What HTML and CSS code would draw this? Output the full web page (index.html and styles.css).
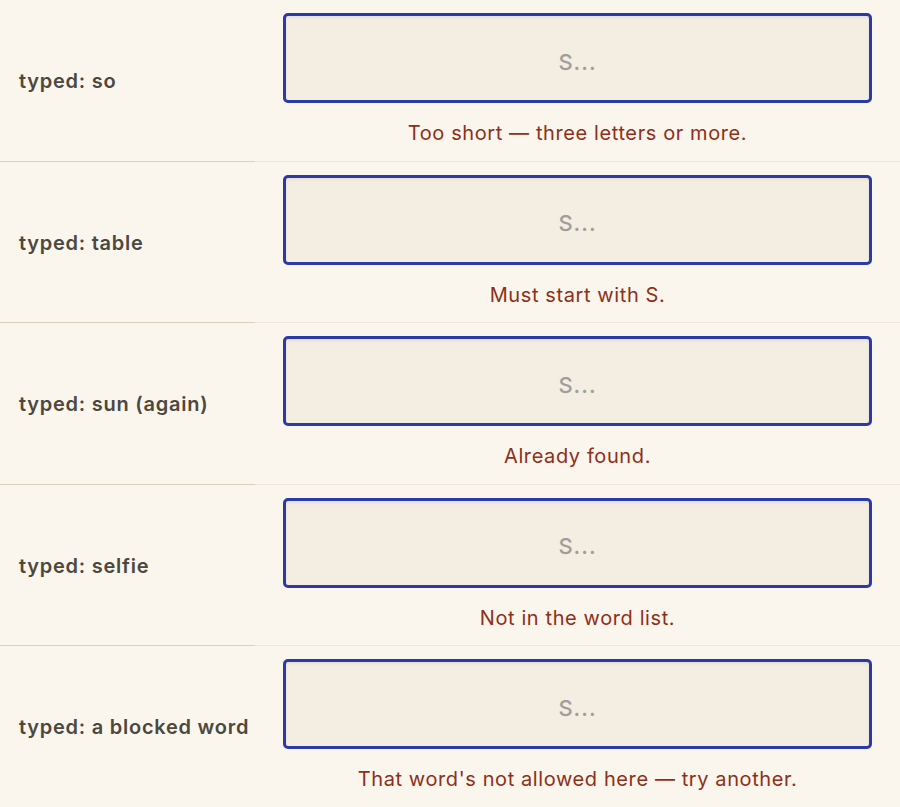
FILE: index.html
```html
<!DOCTYPE html>
<html>
  <head>
    <meta charset="utf-8">
    <title>Word entry states</title>
    <link rel="stylesheet" href="styles.css">
  </head>
  <body>
    <table class="states">
      <tr>
        <th>typed: so</th>
        <td>
          <input type="text" class="guess" placeholder="S...">
          <p class="msg">Too short — three letters or more.</p>
        </td>
      </tr>
      <tr>
        <th>typed: table</th>
        <td>
          <input type="text" class="guess" placeholder="S...">
          <p class="msg">Must start with S.</p>
        </td>
      </tr>
      <tr>
        <th>typed: sun (again)</th>
        <td>
          <input type="text" class="guess" placeholder="S...">
          <p class="msg">Already found.</p>
        </td>
      </tr>
      <tr>
        <th>typed: selfie</th>
        <td>
          <input type="text" class="guess" placeholder="S...">
          <p class="msg">Not in the word list.</p>
        </td>
      </tr>
      <tr>
        <th>typed: a blocked word</th>
        <td>
          <input type="text" class="guess" placeholder="S...">
          <p class="msg">That word's not allowed here — try another.</p>
        </td>
      </tr>
    </table>
  </body>
</html>
```

FILE: styles.css
```css
html, body {
    margin: 0;
    padding: 0;
    background: #faf6ee;
}

body {
    font-family: "Inter", "Liberation Sans", sans-serif;
}

.states {
    width: 900px;
    border-collapse: collapse;
}

.states th {
    width: 236px;
    padding: 2px 0 0 19px;
    text-align: left;
    vertical-align: middle;
    font-size: 20px;
    font-weight: 600;
    letter-spacing: 0.75px;
    color: #4c483d;
    border-bottom: 1px solid #dccfbb;
}

.states td {
    padding: 13px 28px 13px;
    text-align: center;
    border-bottom: 1px solid #ece6db;
}

.guess {
    display: block;
    box-sizing: border-box;
    width: 100%;
    height: 90px;
    margin: 0;
    padding: 7px 0 0;
    border: 3px solid #2c3aa8;
    border-radius: 5px;
    background: #f3ede2;
    box-shadow: inset 0 2px 3px rgba(0, 0, 0, 0.06);
    font-family: inherit;
    font-size: 22px;
    font-weight: 500;
    letter-spacing: 1px;
    text-align: center;
    color: #4c483d;
}

.guess::placeholder {
    color: #a09e9a;
}

.msg {
    margin: 16px 0 0;
    font-size: 20px;
    line-height: 28.5px;
    letter-spacing: 0.6px;
    color: #8e2f17;
}
```
